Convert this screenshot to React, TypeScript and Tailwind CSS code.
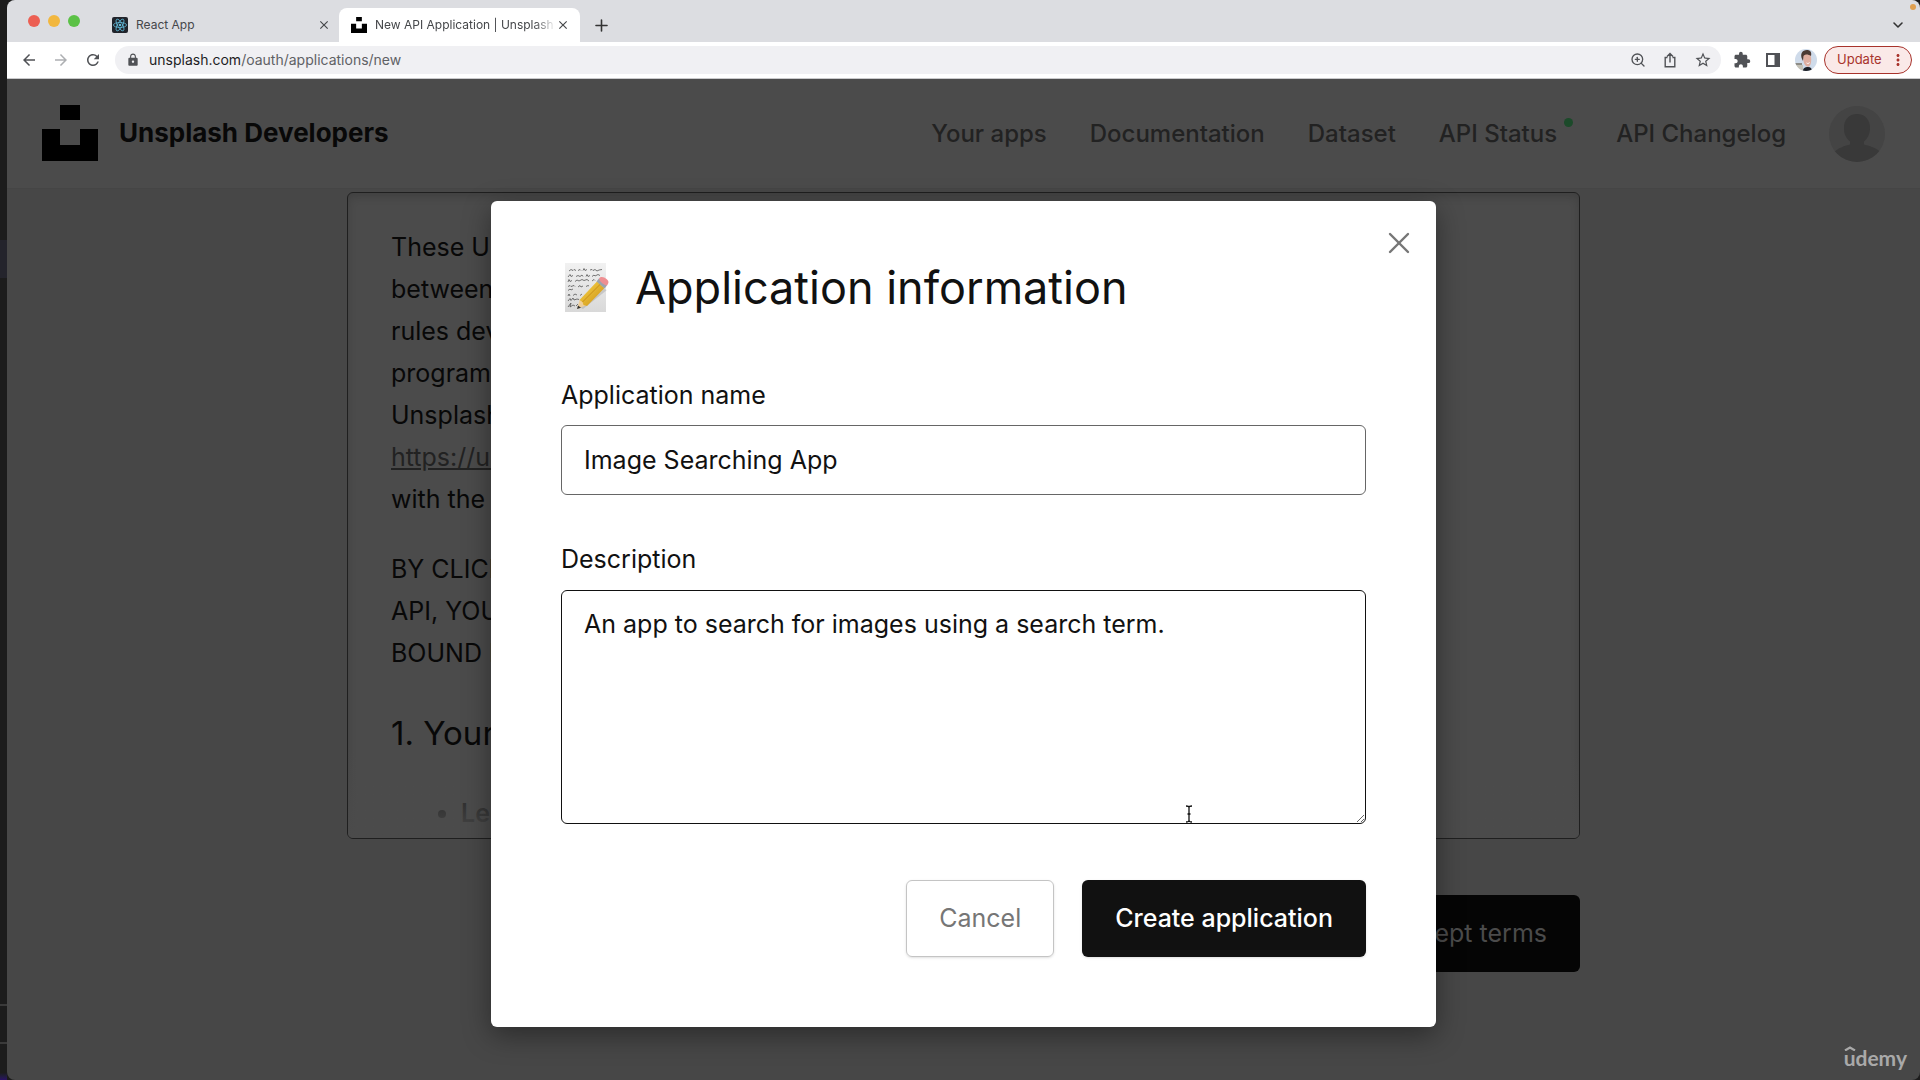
import React from "react";
import { X, Plus, ChevronDown, ZoomIn } from "lucide-react";
import { MdLock, MdExtension, MdArrowBack, MdArrowForward, MdRefresh, MdMoreVert, MdStarBorder, MdClose } from "react-icons/md";

function UnsplashMark({ className }: { className: string }) {
  return (
    <svg viewBox="0 0 56 56" className={className} aria-hidden="true">
      <path d="M18 0h20v15H18zM0 24h18v16h20V24h18v32H0z" fill="#000" />
    </svg>
  );
}

function ReactMark() {
  return (
    <svg viewBox="0 0 16 16" className="size-4" aria-hidden="true">
      <rect width="16" height="16" rx="2" fill="#20232a" />
      <g fill="none" stroke="#61b8d6" strokeWidth="0.8">
        <ellipse cx="8" cy="8" rx="6.6" ry="2.5" />
        <ellipse cx="8" cy="8" rx="6.6" ry="2.5" transform="rotate(60 8 8)" />
        <ellipse cx="8" cy="8" rx="6.6" ry="2.5" transform="rotate(120 8 8)" />
      </g>
      <circle cx="8" cy="8" r="1.3" fill="#61b8d6" />
    </svg>
  );
}

function TabStrip() {
  return (
    <div className="flex h-[42px] items-end bg-[#dcdde1] pr-[14px]">
      <div className="flex h-[42px] w-[94px] items-center gap-2 pl-[21px]">
        <button aria-label="Close window" className="size-3 rounded-full bg-[#ec5f53]" />
        <button aria-label="Minimize window" className="size-3 rounded-full bg-[#f2b73f]" />
        <button aria-label="Zoom window" className="size-3 rounded-full bg-[#5bc146]" />
      </div>
      <div className="flex h-[34px] w-[238px] items-center gap-2 pr-2 pl-[11px] text-xs text-[#45474a]">
        <ReactMark />
        <span className="flex-1">React App</span>
        <button aria-label="Close React App tab"><MdClose size={14} /></button>
      </div>
      <div className="flex h-[34px] w-[241px] items-center rounded-t-lg bg-white pr-[10px] pl-3 text-xs text-[#45474a]">
        <UnsplashMark className="mr-2 size-4 shrink-0" />
        <span className="flex-1 whitespace-nowrap [mask-image:linear-gradient(to_right,black_88%,transparent)]">
          New API Application | Unsplash
        </span>
        <button aria-label="Close Unsplash tab"><MdClose size={14} /></button>
      </div>
      <button aria-label="New tab" className="flex h-[34px] w-[42px] items-center justify-center text-[#333]">
        <Plus size={19} strokeWidth={2} />
      </button>
      <button aria-label="Search tabs" className="ml-auto flex h-[34px] items-center text-[#333]">
        <ChevronDown size={16} strokeWidth={2.4} />
      </button>
    </div>
  );
}

function Portrait() {
  return (
    <svg viewBox="0 0 22 22" className="size-[22px] rounded-full" aria-hidden="true">
      <rect width="22" height="22" fill="#cfdbea" />
      <path d="M0 14h7v2H0z" fill="#8d8c86" />
      <path d="M0 16h8v6H0z" fill="#c4c1b6" />
      <path d="M8 22c0-3 2-4 5-4s4 2 4 4z" fill="#1d2129" />
      <path d="M8 6c3-3 8-2 8 2 .6 4 0 8-2 9.500-2.500 1-5-2-5.500-5.500z" fill="#dfaea0" />
      <path d="M7 10c-2-5 0-9 5-9 3 0 5 2 4 6-3-2-6-2-7.500 0L8 12z" fill="#4a3a34" />
      <path d="M11 13.500c1.500.8 2.500.6 4-.6-.4 2-2.800 2.600-4 .6z" fill="#fff" />
    </svg>
  );
}

function Toolbar() {
  return (
    <div className="flex h-[37px] items-center border-b border-[#c9c9cb] bg-white pr-2 pl-[13px] text-[#505256]">
      <div className="flex gap-[14px] pr-[13px]">
        <button aria-label="Back"><MdArrowBack size={18} /></button>
        <button aria-label="Forward" className="text-[#adafb2]"><MdArrowForward size={18} /></button>
        <button aria-label="Reload"><MdRefresh size={18} /></button>
      </div>
      <div className="flex h-7 flex-1 items-center rounded-full bg-[#f0f0f3] pr-[9px] pl-[11px]">
        <MdLock size={14} />
        <a href="#address" className="ml-[9px] flex-1 text-sm text-[#5f6165]">
          <span className="text-[#1d1d1f]">unsplash.com</span>/oauth/applications/new
        </a>
        <div className="flex gap-4">
          <button aria-label="Zoom"><ZoomIn size={16} strokeWidth={2} /></button>
          <button aria-label="Share">
            <svg viewBox="0 0 16 16" className="size-4" fill="none" stroke="currentColor" strokeWidth="1.4">
              <path d="M5.500 5.500H3.200v9.300h9.600V5.500h-2.300M8 10.500V1.500M5 4.500l3-3 3 3" />
            </svg>
          </button>
          <button aria-label="Bookmark"><MdStarBorder size={18} /></button>
        </div>
      </div>
      <div className="flex items-center gap-[10px] pr-[7px] pl-3">
        <button aria-label="Extensions"><MdExtension size={18} /></button>
        <button aria-label="Side panel" className="flex size-6 items-center justify-center">
          <svg viewBox="0 0 14 14" className="size-[14px]" fill="currentColor">
            <path fillRule="evenodd" d="M0 0h14v14H0zM2 2v10h6.500V2z" />
          </svg>
        </button>
        <button aria-label="Profile"><Portrait /></button>
      </div>
      <button className="flex h-7 w-[88px] items-center justify-between rounded-full border border-[#a8332c] bg-[#fae9e8] pr-1 pl-3 text-[13px] text-[#a8332c]">
        Update
        <MdMoreVert size={18} />
      </button>
    </div>
  );
}

function SiteHeader() {
  return (
    <header className="flex h-[110px] items-center justify-between border-b border-[#454545] bg-[#4b4b4b] px-[35px]">
      <a href="#home" className="flex items-center gap-[21px] pb-[2px] text-[26px] font-bold text-[#080808]">
        <UnsplashMark className="size-14" />
        Unsplash Developers
      </a>
      <nav className="flex items-center gap-[43px] text-2xl font-medium text-[#222]">
        <a href="#apps">Your apps</a>
        <a href="#docs">Documentation</a>
        <a href="#dataset">Dataset</a>
        <a href="#status" className="flex gap-[7px]">
          API Status
          <span className="size-[9px] rounded-full bg-[#1c4a2a]" />
        </a>
        <a href="#changelog">API Changelog</a>
        <a href="#account" aria-label="Account">
          <svg viewBox="0 0 56 56" className="size-14">
            <defs>
              <clipPath id="account-circle"><circle cx="28" cy="28" r="28" /></clipPath>
            </defs>
            <g clipPath="url(#account-circle)">
              <rect width="56" height="56" fill="#444" />
              <path d="M28 8c8 0 13.500 6 13 15-.3 6-3 10-6 12.500v3c4 1 13 3 18 9V56H3v-8c5-6 14-8.500 18-9.500v-3c-3-2.500-6-6.500-6-12.500C14.500 14 20 8 28 8z" fill="#393939" />
            </g>
          </svg>
        </a>
      </nav>
    </header>
  );
}

function Terms() {
  return (
    <main className="mx-auto mt-[3px] flex w-full max-w-[1233px] flex-col items-end">
      <section className="relative h-[647px] w-full overflow-hidden rounded-md border border-[#1f1f1f] bg-[#4b4b4b] px-[43px] pt-[33px] text-[25px] leading-[42px] text-[#080808] shadow-[inset_0_4px_8px_rgba(0,0,0,0.15)]">
        <p>
          These Unsplash<br />
          between you<br />
          rules developers<br />
          programming<br />
          Unsplash API<br />
          <a href="#guidelines" className="text-[#222] underline">https://unspl</a><br />
          with the terms
        </p>
        <p className="mt-7">
          BY CLICKING<br />
          API, YOU ARE<br />
          BOUND BY
        </p>
        <h2 className="mt-[38px] text-[33px]">1. Your use</h2>
        <ul className="mt-[38px] list-disc pl-[70px] font-semibold">
          <li>Legal</li>
        </ul>
        <div className="absolute inset-x-0 bottom-0 h-[90px] bg-linear-to-b from-transparent to-[#4b4b4b]" />
      </section>
      <button className="mt-14 h-[77px] rounded-md bg-[#050505] px-[33px] text-[25px] text-[#4b4b4b]">Accept terms</button>
    </main>
  );
}

function MemoIcon() {
  return (
    <svg viewBox="0 0 46 50" className="h-[50px] w-[46px]" aria-hidden="true">
      <defs>
        <linearGradient id="memo-paper" x1="0" y1="0" x2="0" y2="1">
          <stop offset="0" stopColor="#f1f1f1" />
          <stop offset="1" stopColor="#d9d9d9" />
        </linearGradient>
        <linearGradient id="memo-pencil" x1="0" y1="0" x2="1" y2="1">
          <stop offset="0" stopColor="#fbd94d" />
          <stop offset="1" stopColor="#c98c12" />
        </linearGradient>
      </defs>
      <rect x="1" y="0" width="41" height="49" fill="url(#memo-paper)" />
      <g fill="none" stroke="#555" strokeWidth="0.8">
        <path d="M5 8l2-1.500 2 1 1-1 2 1M14 7.500l2-1 1 1M19 7.500l1-2 1 2 2-1M26 7l2-.5 1 1 2-1 2 1.500 2-1 3-.5" />
        <path d="M4 14l2-2.500 1 2 2-1M12 13.500l2-1 2 1 2-1.500 1 1.500M22 13.500l1-2 1 2 2-1M28 13.500l2-1.500 1 1 3-1.500 2 1" />
        <path d="M4 19l1-2.500 1 2 2-1M11 18.500l2-1.500 2 1 3-1.500 2 1 3-1 2 1.500M28 18l2-1.500 1 1" />
        <path d="M4 23.500l2-1 1 1 3-1 1 1M14 24l2-1.500 1 1.500 2-1M22 23.500l2-1 1 .5M4 27.500l2-1.500 1 1 2-1" />
        <path d="M4 33l1-2 1 2M9 32.500l2-1.500 2 1M16 32.500l2-1.500M4 38l2-2.500 1 2 2-2.500 1 2 3-1 2 .5M4 44l3-4-1 4 3-2 2 1M12 43l2-2" />
      </g>
      <path d="M15 44l20-20 8 3-24 19z" fill="#000" opacity="0.12" />
      <path d="M13 46l3-10 7 6z" fill="#efcf9a" />
      <path d="M13 46l1-3.500 3 2.200z" fill="#333" />
      <path d="M15.500 37L33 18.500l7.500 6.500L23 43l-3.500-1-1-3z" fill="url(#memo-pencil)" />
      <path d="M18.500 39L36.500 21" stroke="#c98f17" strokeWidth="1" />
      <path d="M32.500 18.500l2.500-3 8 7-2.500 3z" fill="#9ba3ad" />
      <path d="M35 15.500c2-2.500 5-1.500 7.500.5s2.500 3.500.5 6.500c-3-.5-7-3-8-7z" fill="#ee8f92" />
    </svg>
  );
}

function ApplicationDialog() {
  return (
    <div className="absolute inset-0 flex items-start justify-center pt-[122px]">
      <form
        role="dialog"
        aria-labelledby="dialog-title"
        onSubmit={(e) => e.preventDefault()}
        className="relative flex w-full max-w-[945px] flex-col rounded-md bg-white px-[70px] pt-[52px] pb-[70px] text-[25px] text-[#111] shadow-[0_8px_28px_rgba(0,0,0,0.4)]"
      >
        <button type="button" aria-label="Close" className="absolute top-6 right-[19px] text-[#767676]">
          <X size={36} strokeWidth={1.6} />
        </button>
        <div className="flex h-[70px] items-center gap-[25px] pl-[3px]">
          <MemoIcon />
          <h1 id="dialog-title" className="text-[45px]">Application information</h1>
        </div>
        <label htmlFor="app-name" className="mt-[51px] leading-[42px]">Application name</label>
        <input
          id="app-name"
          defaultValue="Image Searching App"
          className="mt-[9px] h-[70px] rounded-md border border-[#666] px-[22px] outline-none"
        />
        <label htmlFor="app-description" className="mt-[43px] leading-[42px]">Description</label>
        <textarea
          id="app-description"
          defaultValue="An app to search for images using a search term."
          className="mt-[10px] h-[234px] resize rounded-md border border-[#111] px-[22px] py-3 leading-[42px] outline-none"
        />
        <div className="mt-14 flex justify-end gap-7">
          <button type="button" className="h-[77px] rounded-md border border-[#c4c4c4] px-8 text-[#767676] shadow-sm">Cancel</button>
          <button type="submit" className="h-[77px] rounded-md bg-[#111] px-[33px] font-medium text-white shadow-sm">Create application</button>
        </div>
        <svg viewBox="0 0 8 18" className="absolute top-[604px] left-[694px] h-[18px] w-2" fill="none" stroke="#111" strokeWidth="1.3" aria-hidden="true">
          <path d="M1 1c2 0 3 .5 3 1.500v13C4 16.500 3 17 1 17M7 1C5 1 4 1.500 4 2.500v13c0 1 1 1.500 3 1.500M2.500 9h3" />
        </svg>
      </form>
    </div>
  );
}

export default function App() {
  return (
    <div className="flex min-h-screen bg-[#1c1c1c] font-['Inter',sans-serif]">
      <aside className="flex w-[7px] shrink-0 flex-col pt-60" aria-hidden="true">
        <div className="h-[38px] bg-[#24242c]" />
        <div className="mt-auto h-[38px] border-t-2 border-[#3a3a3a]" />
        <div className="h-[38px] border-t-2 border-[#3a3a3a] bg-linear-to-b from-[#1c1c1c] from-80% to-[#2b1065]" />
      </aside>
      <div className="flex min-w-0 flex-1 flex-col overflow-hidden rounded-lg bg-[#474747]">
        <TabStrip />
        <Toolbar />
        <div className="relative flex-1">
          <SiteHeader />
          <Terms />
          <ApplicationDialog />
          <div className="absolute right-[13px] bottom-2 text-[#a9a9a9]">
            <svg viewBox="0 0 12 5" className="absolute top-[2px] left-0 h-[5px] w-3" fill="none" stroke="currentColor" strokeWidth="2.2" aria-hidden="true">
              <path d="M1 4.500l5-3 5 3" />
            </svg>
            <span className="font-['Lato',sans-serif] text-[21px] leading-7 font-bold">udemy</span>
          </div>
        </div>
      </div>
      <div className="absolute top-1 right-1 size-[6px] rounded-full bg-[#e0a050]" />
    </div>
  );
}
